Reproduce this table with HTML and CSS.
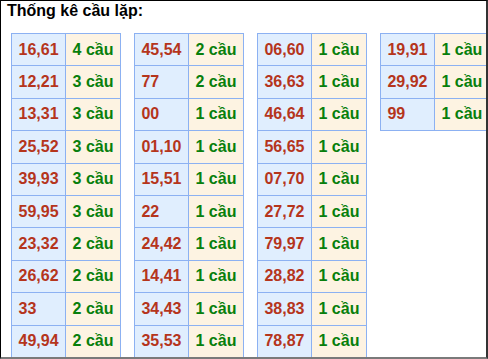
FILE: index.html
```html
<!DOCTYPE html>
<html lang="vi">
<head>
<meta charset="utf-8">
<title>Thống kê cầu lặp</title>
<link rel="stylesheet" href="styles.css">
</head>
<body>
<div class="frame">
  <div class="title">Thống kê cầu lặp:</div>
  <div class="tables">
    <table class="stat">
      <tr><td class="num">16,61</td><td class="cnt">4 cầu</td></tr>
      <tr><td class="num">12,21</td><td class="cnt">3 cầu</td></tr>
      <tr><td class="num">13,31</td><td class="cnt">3 cầu</td></tr>
      <tr><td class="num">25,52</td><td class="cnt">3 cầu</td></tr>
      <tr><td class="num">39,93</td><td class="cnt">3 cầu</td></tr>
      <tr><td class="num">59,95</td><td class="cnt">3 cầu</td></tr>
      <tr><td class="num">23,32</td><td class="cnt">2 cầu</td></tr>
      <tr><td class="num">26,62</td><td class="cnt">2 cầu</td></tr>
      <tr><td class="num">33</td><td class="cnt">2 cầu</td></tr>
      <tr><td class="num">49,94</td><td class="cnt">2 cầu</td></tr>
    </table>
    <table class="stat">
      <tr><td class="num">45,54</td><td class="cnt">2 cầu</td></tr>
      <tr><td class="num">77</td><td class="cnt">2 cầu</td></tr>
      <tr><td class="num">00</td><td class="cnt">1 cầu</td></tr>
      <tr><td class="num">01,10</td><td class="cnt">1 cầu</td></tr>
      <tr><td class="num">15,51</td><td class="cnt">1 cầu</td></tr>
      <tr><td class="num">22</td><td class="cnt">1 cầu</td></tr>
      <tr><td class="num">24,42</td><td class="cnt">1 cầu</td></tr>
      <tr><td class="num">14,41</td><td class="cnt">1 cầu</td></tr>
      <tr><td class="num">34,43</td><td class="cnt">1 cầu</td></tr>
      <tr><td class="num">35,53</td><td class="cnt">1 cầu</td></tr>
    </table>
    <table class="stat">
      <tr><td class="num">06,60</td><td class="cnt">1 cầu</td></tr>
      <tr><td class="num">36,63</td><td class="cnt">1 cầu</td></tr>
      <tr><td class="num">46,64</td><td class="cnt">1 cầu</td></tr>
      <tr><td class="num">56,65</td><td class="cnt">1 cầu</td></tr>
      <tr><td class="num">07,70</td><td class="cnt">1 cầu</td></tr>
      <tr><td class="num">27,72</td><td class="cnt">1 cầu</td></tr>
      <tr><td class="num">79,97</td><td class="cnt">1 cầu</td></tr>
      <tr><td class="num">28,82</td><td class="cnt">1 cầu</td></tr>
      <tr><td class="num">38,83</td><td class="cnt">1 cầu</td></tr>
      <tr><td class="num">78,87</td><td class="cnt">1 cầu</td></tr>
    </table>
    <table class="stat">
      <tr><td class="num">19,91</td><td class="cnt">1 cầu</td></tr>
      <tr><td class="num">29,92</td><td class="cnt">1 cầu</td></tr>
      <tr><td class="num">99</td><td class="cnt">1 cầu</td></tr>
    </table>
  </div>
</div>
</body>
</html>
```
FILE: styles.css
```css
html, body {
  margin: 0;
  padding: 0;
  background: #ffffff;
}

.frame {
  box-sizing: border-box;
  width: 488px;
  height: 359px;
  overflow: hidden;
  border-top: 1px solid #000000;
  border-left: 1px solid #000000;
  border-right: 2px solid #333333;
  border-bottom: 2px solid #7a7a7a;
  font-family: "Liberation Sans", Arial, sans-serif;
  font-size: 16px;
  font-weight: bold;
  padding: 1px 0 0 6px;
}

.title {
  color: #000000;
  line-height: 18.4px;
}

.tables {
  display: flex;
  align-items: flex-start;
  gap: 13px;
  margin-top: 12.6px;
  margin-left: 4px;
  width: 600px;
}

.stat {
  border-collapse: collapse;
  flex: none;
}

.stat td {
  border: 1px solid #8cb1f2;
  padding: 6.5px 6.5px;
  line-height: 18.4px;
  white-space: nowrap;
  text-align: left;
}

.num {
  background: #e0eefe;
  color: #b5351c;
}

.cnt {
  background: #fdf3e2;
  color: #087f0c;
}
```
